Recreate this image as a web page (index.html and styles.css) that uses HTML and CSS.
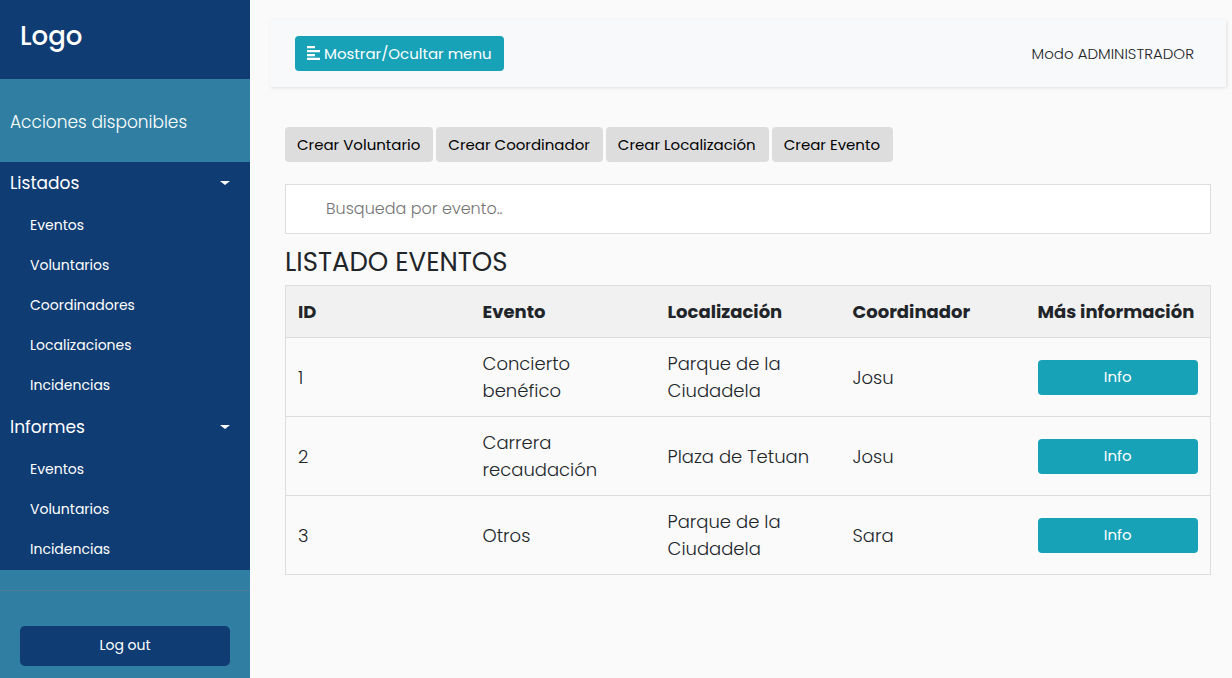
FILE: index.html
```html
<!DOCTYPE html>
<html lang="es">
<head>
<meta charset="utf-8">
<meta name="viewport" content="width=device-width, initial-scale=1">
<title>Listado eventos</title>
<link rel="stylesheet" href="styles.css">
</head>
<body>
<div class="wrapper">
  <nav class="sidebar">
    <div class="brand"><h3>Logo</h3></div>
    <p class="sidebar-title">Acciones disponibles</p>
    <ul class="menu">
      <li>
        <a class="menu-toggle" href="#listados">Listados</a>
        <ul class="submenu" id="listados">
          <li><a href="#">Eventos</a></li>
          <li><a href="#">Voluntarios</a></li>
          <li><a href="#">Coordinadores</a></li>
          <li><a href="#">Localizaciones</a></li>
          <li><a href="#">Incidencias</a></li>
        </ul>
      </li>
      <li>
        <a class="menu-toggle" href="#informes">Informes</a>
        <ul class="submenu" id="informes">
          <li><a href="#">Eventos</a></li>
          <li><a href="#">Voluntarios</a></li>
          <li><a href="#">Incidencias</a></li>
        </ul>
      </li>
    </ul>
    <div class="session"><a class="logout" href="#">Log out</a></div>
  </nav>

  <main class="content">
    <header class="topbar">
      <button class="btn btn-info" type="button">
        <svg class="icon" viewBox="0 0 13 14" aria-hidden="true"><path fill="currentColor" d="M0 0h8v2.200H0zM0 4h13v2.200H0zM0 8h8v2.200H0zM0 11.800h13v2.200H0z"/></svg>
        <span>Mostrar/Ocultar menu</span>
      </button>
      <span class="mode">Modo ADMINISTRADOR</span>
    </header>

    <section class="panel">
      <div class="actions">
        <button class="btn btn-plain" type="button">Crear Voluntario</button>
        <button class="btn btn-plain" type="button">Crear Coordinador</button>
        <button class="btn btn-plain" type="button">Crear Localización</button>
        <button class="btn btn-plain" type="button">Crear Evento</button>
      </div>
      <input class="search" type="text" placeholder="Busqueda por evento.." aria-label="Busqueda por evento">
      <h2 class="title">LISTADO EVENTOS</h2>
      <table class="events">
        <thead>
          <tr><th>ID</th><th>Evento</th><th>Localización</th><th>Coordinador</th><th>Más información</th></tr>
        </thead>
        <tbody>
          <tr><td>1</td><td>Concierto benéfico</td><td>Parque de la Ciudadela</td><td>Josu</td><td><button class="btn btn-info btn-block" type="button">Info</button></td></tr>
          <tr><td>2</td><td>Carrera recaudación</td><td>Plaza de Tetuan</td><td>Josu</td><td><button class="btn btn-info btn-block" type="button">Info</button></td></tr>
          <tr><td>3</td><td>Otros</td><td>Parque de la Ciudadela</td><td>Sara</td><td><button class="btn btn-info btn-block" type="button">Info</button></td></tr>
        </tbody>
      </table>
    </section>
  </main>
</div>
</body>
</html>
```

FILE: styles.css
```css
*, *::before, *::after { box-sizing: border-box; }

body {
  margin: 0;
  background: #fafafa;
  color: #212529;
  font-family: Poppins, Inter, "Open Sans", sans-serif;
  font-size: 16px;
  line-height: 24px;
}

h2, h3, p, ul { margin: 0; }
ul { padding: 0; list-style: none; }
a { color: inherit; text-decoration: none; }

.wrapper { display: flex; min-height: 100vh; }

/* Sidebar */
.sidebar {
  flex: 0 0 250px;
  background: #307fa3;
  color: #fff;
}
.brand { padding: 20px 20px 27px; background: #0f3c73; }
.brand h3 { font-size: 26px; line-height: 32px; font-weight: 500; }
.sidebar-title {
  padding: 31px 10px 28px;
  font-size: 17px;
  font-weight: 300;
}
.menu { background: #0f3c73; }
.menu-toggle {
  display: flex;
  align-items: center;
  justify-content: space-between;
  height: 44px;
  padding: 0 20px 2px 10px;
  font-size: 17px;
}
.menu-toggle::after {
  content: "";
  border: 5px solid transparent;
  border-top-color: #fff;
  border-top-width: 4px;
  border-bottom: 0;
}
.submenu a {
  display: block;
  padding: 7px 10px 9px 30px;
  font-size: 14px;
}
.session {
  margin-top: 20px;
  padding: 35px 20px 12px;
  border-top: 1px solid #4b7a94;
}
.logout {
  display: block;
  padding: 7px 8px 9px;
  border-radius: 5px;
  background: #0f3c73;
  font-size: 14px;
  text-align: center;
}

/* Content */
.content { flex: 1; min-width: 0; padding: 20px 6px 20px 20px; }
.topbar {
  display: flex;
  align-items: center;
  justify-content: space-between;
  padding: 16px 32px 16px 25px;
  background: #f8f9fa;
  box-shadow: 1px 1px 3px rgba(0, 0, 0, 0.1);
}
.mode { font-size: 15px; font-weight: 300; }

.btn {
  padding: 6px 12px 5px;
  border: 0;
  border-radius: 4px;
  font: inherit;
  font-size: 15px;
  font-weight: 400;
  line-height: 24px;
}
.btn-info {
  display: inline-flex;
  align-items: center;
  justify-content: center;
  gap: 4px;
  background: #17a2b8;
  color: #fff;
}
.btn-block { width: 100%; padding: 5px 12px 6px; }
.btn-plain { padding-right: 13px; background: #ddd; color: #000; }
.icon { width: 13px; height: 14px; margin-bottom: 2px; }

.panel { padding: 40px 15px 0; }
.actions { display: flex; flex-wrap: wrap; gap: 3px; }
.search {
  display: block;
  width: 100%;
  height: 50px;
  margin: 22px 0 12px;
  padding: 0 20px 1px 40px;
  border: 1px solid #ddd;
  background: #fff;
  font: inherit;
  font-weight: 300;
}
.search::placeholder { color: #757575; opacity: 1; }
.title {
  margin-bottom: 7px;
  font-size: 26px;
  line-height: 32px;
  font-weight: 400;
}

.events {
  width: 100%;
  table-layout: fixed;
  border: 1px solid #ddd;
  border-collapse: collapse;
  font-size: 18px;
  line-height: 27px;
}
.events th, .events td {
  padding: 12px;
  text-align: left;
  vertical-align: middle;
}
.events tr { border-bottom: 1px solid #ddd; }
.events thead { background: #f1f1f1; }
.events th { font-weight: 700; white-space: nowrap; }
.events td { font-weight: 300; }
```
